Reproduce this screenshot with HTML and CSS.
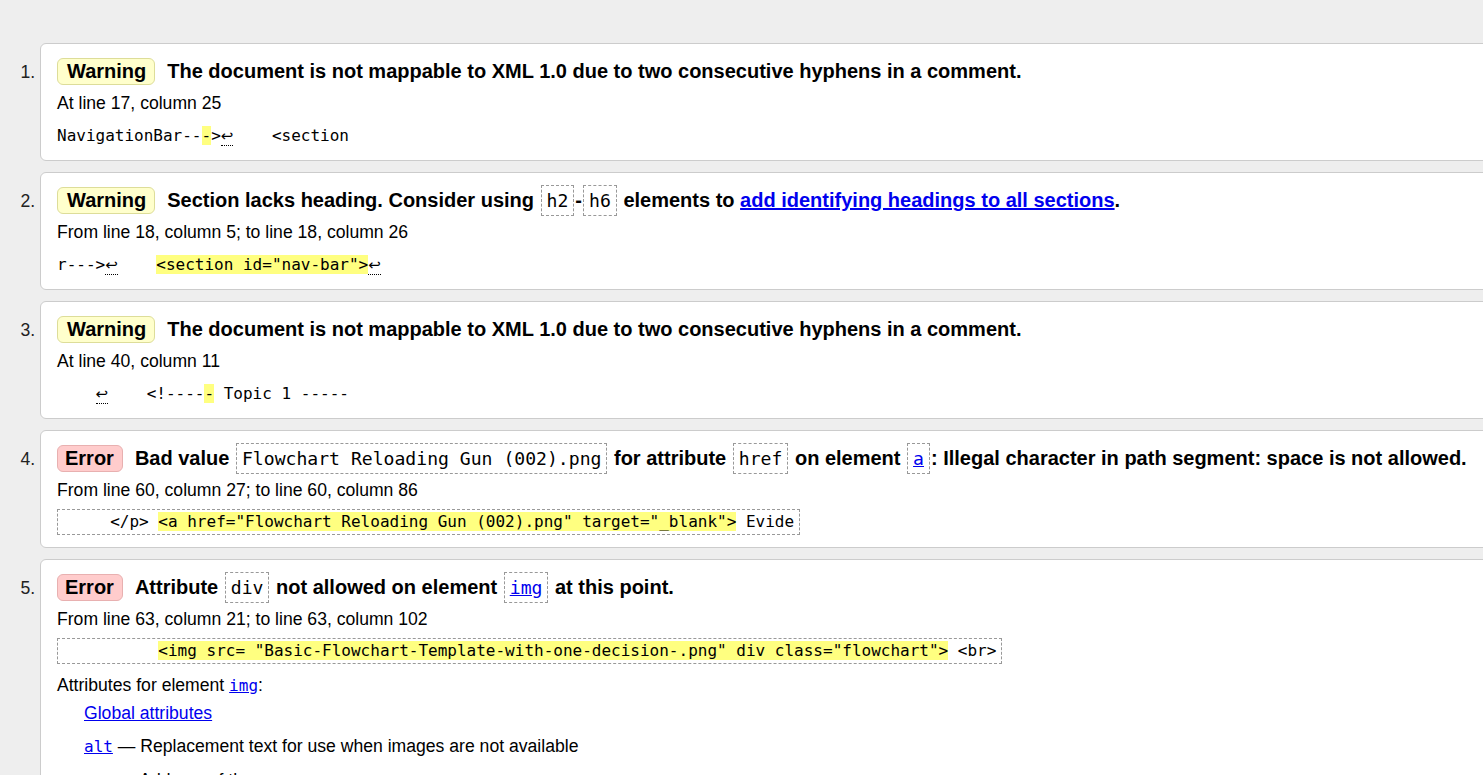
FILE: index.html
```html
<!DOCTYPE html>
<html lang="en">
<head>
<meta charset="utf-8">
<title>Nu Html Checker results</title>
<link rel="stylesheet" href="styles.css">
</head>
<body>
<ol class="results">
  <li class="msg">
    <p class="title"><span class="badge warn">Warning</span><span class="text">The document is not mappable to XML 1.0 due to two consecutive hyphens in a comment.</span></p>
    <p class="location">At line 17, column 25</p>
    <p class="extract"><code>NavigationBar--<mark>-</mark>&gt;<span class="lf" title="Line break">↩</span>    &lt;section</code></p>
  </li>
  <li class="msg">
    <p class="title"><span class="badge warn">Warning</span><span class="text">Section lacks heading. Consider using <code>h2</code>-<code>h6</code> elements to <a href="#">add identifying headings to all sections</a>.</span></p>
    <p class="location">From line 18, column 5; to line 18, column 26</p>
    <p class="extract"><code>r---&gt;<span class="lf" title="Line break">↩</span>    <mark>&lt;section id="nav-bar"&gt;</mark><span class="lf" title="Line break">↩</span></code></p>
  </li>
  <li class="msg">
    <p class="title"><span class="badge warn">Warning</span><span class="text">The document is not mappable to XML 1.0 due to two consecutive hyphens in a comment.</span></p>
    <p class="location">At line 40, column 11</p>
    <p class="extract"><code>    <span class="lf" title="Line break">↩</span>    &lt;!----<mark>-</mark> Topic 1 -----</code></p>
  </li>
  <li class="msg">
    <p class="title"><span class="badge err">Error</span><span class="text">Bad value <code>Flowchart Reloading Gun (002).png</code> for attribute <code>href</code> on element <code><a href="#">a</a></code>: Illegal character in path segment: space is not allowed.</span></p>
    <p class="location">From line 60, column 27; to line 60, column 86</p>
    <p class="extract boxed"><code>     &lt;/p&gt; <mark>&lt;a href="Flowchart Reloading Gun (002).png" target="_blank"&gt;</mark> Evide</code></p>
  </li>
  <li class="msg">
    <p class="title"><span class="badge err">Error</span><span class="text">Attribute <code>div</code> not allowed on element <code><a href="#">img</a></code> at this point.</span></p>
    <p class="location">From line 63, column 21; to line 63, column 102</p>
    <p class="extract boxed"><code>          <mark>&lt;img src= "Basic-Flowchart-Template-with-one-decision-.png" div class="flowchart"&gt;</mark> &lt;br&gt;</code></p>
    <dl class="attrs">
      <dt>Attributes for element <a href="#"><code>img</code></a>:</dt>
      <dd><a href="#">Global attributes</a></dd>
      <dd><a href="#"><code>alt</code></a> — Replacement text for use when images are not available</dd>
      <dd><a href="#"><code>src</code></a> — Address of the resource</dd>
    </dl>
  </li>
</ol>
</body>
</html>
```
FILE: styles.css
```css
html {
  background: #eeeeee;
}

body {
  margin: 0;
  font-family: "Liberation Sans", Arial, sans-serif;
  font-size: 17.6px;
  color: #000;
  overflow: hidden;
}

.results {
  margin: 43px 0 0;
  padding: 0 0 0 40px;
}

.msg {
  width: 1500px;
  box-sizing: border-box;
  background: #fff;
  border: 1px solid #cccccc;
  border-radius: 6px;
  padding: 14px 16px 12px;
  margin-bottom: 11px;
}

.msg::marker {
  color: #222;
}

.title {
  margin: 0;
  height: 28px;
  font-size: 20px;
  line-height: 27px;
  font-weight: bold;
  white-space: nowrap;
}

.badge {
  display: inline-block;
  vertical-align: top;
  line-height: 25px;
  padding: 0 8px 0 9px;
  margin-right: 12px;
  border-radius: 6px;
}

.badge.warn {
  background: #ffffcc;
  border: 1px solid #dddd99;
}

.badge.err {
  background: #ffcccc;
  border: 1px solid #e8b0b0;
  padding: 0 8px 0 7px;
  margin-right: 12px;
}

.title code {
  font-family: "DejaVu Sans Mono", "Liberation Mono", monospace;
  font-size: 18.1px;
  line-height: 1;
  font-weight: normal;
  border: 1px dashed #999;
  padding: 4px 5px;
  margin: 0 1px;
}

a {
  color: #0000ee;
  text-decoration: underline;
}

.location {
  margin: 4px 0 0;
  height: 26px;
  line-height: 26px;
}

.extract {
  margin: 6px 0 0;
  height: 26px;
  line-height: 26px;
}

.extract code,
.attrs code {
  font-family: "DejaVu Sans Mono", "Liberation Mono", monospace;
  font-size: 16px;
}

.extract code {
  white-space: pre;
}

.extract.boxed code {
  display: inline-block;
  vertical-align: top;
  line-height: 24px;
  border: 1px dashed #999;
  padding: 0 5px 0 4px;
}

mark {
  background: #ffff80;
  color: inherit;
}

.lf {
  font-family: "DejaVu Sans", sans-serif;
  font-size: 15px;
  line-height: 1;
  border-bottom: 1px dotted #000;
}

.attrs {
  margin: 8px 0 0;
  line-height: 26px;
}

.attrs dt {
  margin: 0;
}

.attrs dd {
  margin: 1px 0 0 27px;
}

.attrs dd + dd {
  margin-top: 7px;
}
```
